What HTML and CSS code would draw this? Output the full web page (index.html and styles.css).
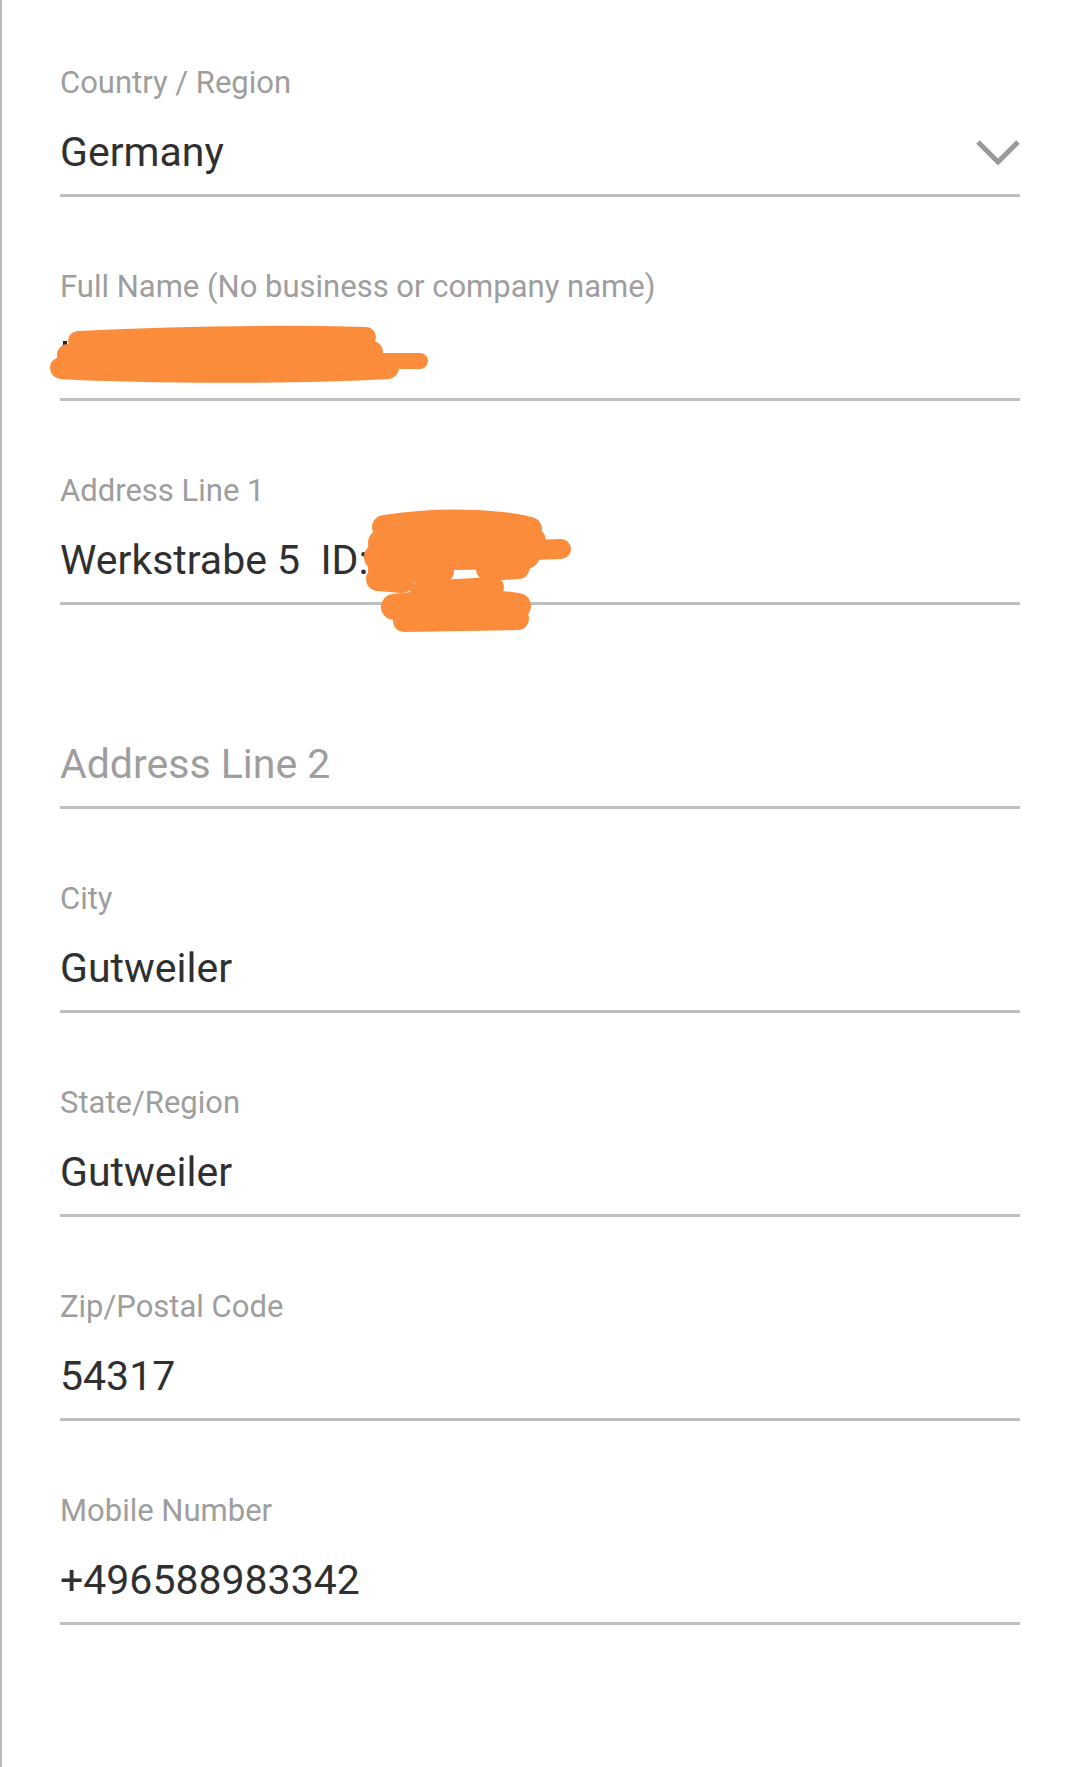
FILE: index.html
```html
<!DOCTYPE html>
<html lang="en">
<head>
    <meta charset="UTF-8" />
    <meta name="viewport" content="width=device-width, initial-scale=1" />
    <title>Shipping Address</title>
    <link rel="stylesheet" href="styles.css">
</head>
<body>
    <div class="sheet">
        <form class="address-form">
            <div class="field">
                <label class="field-label">Country / Region</label>
                <div class="field-value">
                    <span>Germany</span>
                    <svg class="chevron" viewBox="0 0 44 26" width="44" height="26" aria-hidden="true">
                        <polyline points="2,3 22,23 42,3" fill="none" stroke="#9a9a9a" stroke-width="5" />
                    </svg>
                </div>
            </div>

            <div class="field">
                <label class="field-label">Full Name (No business or company name)</label>
                <div class="field-value">&nbsp;</div>
                <!-- redaction scribble, drawn in page coordinates -->
                <svg class="scribble scribble-name" viewBox="40 315 400 100" width="400" height="100" aria-hidden="true">
                    <rect x="63" y="341" width="4" height="6" fill="#222" />
                    <g fill="none" stroke="#fb8c3c" stroke-linecap="round" stroke-linejoin="round">
                        <path d="M78 341 C160 337 260 334 366 337" stroke-width="20" />
                        <path d="M68 355 L372 352" stroke-width="22" />
                        <path d="M61 368 C150 373 300 373 388 368" stroke-width="22" />
                        <path d="M372 361 L420 361" stroke-width="16" />
                    </g>
                </svg>
            </div>

            <div class="field">
                <label class="field-label">Address Line 1</label>
                <div class="field-value">Werkstrabe 5&nbsp; ID:</div>
                <svg class="scribble scribble-address" viewBox="340 500 240 140" width="240" height="140" aria-hidden="true">
                    <g fill="none" stroke="#fb8c3c" stroke-linecap="round" stroke-linejoin="round">
                        <path d="M378 524 C430 516 490 517 524 526" stroke-width="24" />
                        <path d="M500 548 L555 546" stroke-width="20" />
                        <path d="M376 540 L526 538" stroke-width="28" />
                        <path d="M372 554 L520 552" stroke-width="28" />
                        <path d="M374 566 L436 568 M482 566 L512 564" stroke-width="24" />
                        <path d="M372 576 L396 578" stroke-width="24" />
                        <path d="M414 588 L488 584" stroke-width="20" />
                        <path d="M388 604 C430 599 480 598 512 603" stroke-width="26" />
                        <path d="M398 618 L512 616" stroke-width="22" />
                    </g>
                </svg>
            </div>

            <div class="field">
                <label class="field-label"></label>
                <div class="field-value placeholder">Address Line 2</div>
            </div>

            <div class="field">
                <label class="field-label">City</label>
                <div class="field-value">Gutweiler</div>
            </div>

            <div class="field">
                <label class="field-label">State/Region</label>
                <div class="field-value">Gutweiler</div>
            </div>

            <div class="field">
                <label class="field-label">Zip/Postal Code</label>
                <div class="field-value">54317</div>
            </div>

            <div class="field">
                <label class="field-label">Mobile Number</label>
                <div class="field-value">+496588983342</div>
            </div>
        </form>
    </div>
</body>
</html>
```

FILE: styles.css
```css
body {
    margin: 0;
    padding: 0;
    background: #fff;
    font-family: Roboto, "Noto Sans", sans-serif;
}
.sheet {
    min-height: 100vh;
    box-sizing: border-box;
    border-left: 2px solid #b8b8b8;
    padding: 65px 60px 0 58px;
}
.address-form {
    display: flex;
    flex-direction: column;
    gap: 72px;
}
.field {
    position: relative;
    padding-bottom: 18px;
    border-bottom: 3px solid #bfbfbf;
}
.field-label {
    display: block;
    height: 36px;
    margin-bottom: 27px;
    font-size: 31px;
    line-height: 36px;
    color: #9e9e9e;
}
.field-value {
    display: flex;
    align-items: center;
    justify-content: space-between;
    height: 48px;
    font-size: 41px;
    line-height: 48px;
    color: #303030;
    white-space: pre;
}
.field-value.placeholder {
    color: #9e9e9e;
}
.chevron {
    flex-shrink: 0;
}
/* orange marker over the private bits */
.scribble {
    position: absolute;
}
.scribble-name {
    left: -20px;
    top: 46px;
}
.scribble-address {
    left: 286px;
    top: 30px;
}
```
